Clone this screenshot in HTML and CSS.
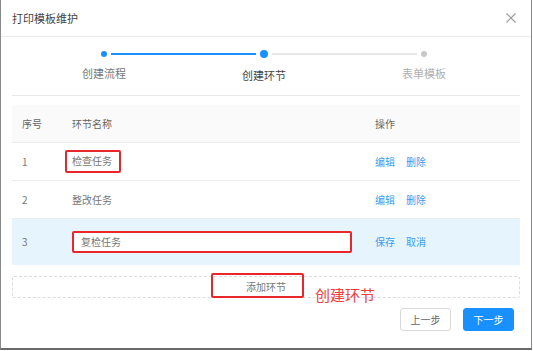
FILE: index.html
```html
<!DOCTYPE html>
<html lang="zh">
<head>
<meta charset="utf-8">
<link rel="stylesheet" href="styles.css">
</head>
<body>
<div class="frame">
  <div class="header">
    <span class="title">打印模板维护</span>
    <svg class="close" width="10" height="10" viewBox="0 0 10 10"><path d="M0.5 0.5L9.5 9.5M9.5 0.5L0.5 9.5" stroke="#999" stroke-width="1.1" fill="none"/></svg>
  </div>
  <div class="steps">
    <div class="track">
      <span class="dot done"></span>
      <span class="line done"></span>
      <span class="dot active"></span>
      <span class="line"></span>
      <span class="dot"></span>
    </div>
    <div class="labels">
      <span class="label">创建流程</span>
      <span class="label current">创建环节</span>
      <span class="label todo">表单模板</span>
    </div>
  </div>
  <div class="table">
    <div class="row head">
      <div class="cell">序号</div>
      <div class="cell">环节名称</div>
      <div class="cell">操作</div>
    </div>
    <div class="row">
      <div class="cell">1</div>
      <div class="cell"><span class="mark">检查任务</span></div>
      <div class="cell ops"><a>编辑</a><a>删除</a></div>
    </div>
    <div class="row">
      <div class="cell">2</div>
      <div class="cell">整改任务</div>
      <div class="cell ops"><a>编辑</a><a>删除</a></div>
    </div>
    <div class="row editing">
      <div class="cell">3</div>
      <div class="cell"><div class="input">复检任务</div></div>
      <div class="cell ops"><a>保存</a><a>取消</a></div>
    </div>
  </div>
  <div class="add">
    <span class="add-text">添加环节</span>
    <span class="add-mark"></span>
    <span class="note">创建环节</span>
  </div>
  <div class="footer">
    <button class="btn">上一步</button>
    <button class="btn primary">下一步</button>
  </div>
</div>
</body>
</html>
```

FILE: styles.css
```css
* { box-sizing: border-box; }
html, body { margin: 0; padding: 0; background: #fff; }
body {
  width: 533px;
  height: 351px;
  overflow: hidden;
  font-family: "Noto Sans CJK SC", "Noto Sans", sans-serif;
}
.frame {
  width: 532px;
  height: 350px;
  border-left: 1px solid #8a8a8a;
  border-right: 1px solid #8a8a8a;
  border-bottom: 2px solid #6a6a6a;
  background: #fff;
}
.header {
  height: 37px;
  border-bottom: 1px solid #e8e8e8;
  display: flex;
  align-items: center;
  justify-content: space-between;
  padding: 0 15px 0 11px;
}
.title { font-size: 11px; color: #444; line-height: 14px; }
.close { display: block; }
.steps {
  margin: 0 11px;
  padding-top: 13px;
  padding-bottom: 13px;
  border-bottom: 1px solid #e8e8e8;
}
.track {
  width: 326px;
  margin-left: 89px;
  height: 8px;
  display: flex;
  align-items: center;
}
.dot {
  width: 6px;
  height: 6px;
  border-radius: 50%;
  background: #c8c8c8;
  flex: none;
}
.dot.done { background: #1890ff; }
.dot.active { width: 8px; height: 8px; background: #1890ff; }
.line {
  flex: 1;
  height: 2px;
  margin: 0 4px;
  background: #e8e8e8;
}
.line.done { background: #1890ff; }
.labels {
  width: 480px;
  margin: 8px 0 0 12px;
  display: grid;
  grid-template-columns: 160px 160px 160px;
}
.label {
  text-align: center;
  font-size: 11px;
  line-height: 14px;
  color: #777;
}
.label.current { color: #444; padding-top: 2px; }
.label.todo { color: #b0b0b0; }
.table { margin: 9px 11px 0; }
.row {
  display: grid;
  grid-template-columns: 50px 303px 1fr;
  align-items: center;
  height: 38px;
  border-bottom: 1px solid #ececec;
  font-size: 10px;
  color: #777;
}
.row.head { background: #fafafa; color: #666; }
.row.editing { background: #e6f5fd; height: 46px; border-bottom: 1px solid #e6f5fd; }
.cell { padding-left: 10px; line-height: 14px; }
.mark {
  display: inline-block;
  margin-left: -7px;
  padding: 2px 7px 3px 5px;
  border: 2px solid #e8262b;
  border-radius: 2px;
  width: 56px;
}
.input {
  width: 280px;
  height: 22px;
  border: 2px solid #e8262b;
  border-radius: 2px;
  background: #fff;
  padding-left: 7px;
  display: flex;
  align-items: center;
  color: #777;
}
.ops a { color: #3a9cf2; margin-right: 11px; cursor: pointer; }
.add {
  position: relative;
  margin: 11px 11px 0;
  height: 22px;
  border: 1px dashed #dcdcdc;
  border-radius: 2px;
  display: flex;
  align-items: center;
  justify-content: center;
}
.add-text { font-size: 10px; color: #777; line-height: 14px; }
.add-mark {
  position: absolute;
  left: 198px;
  top: -4px;
  width: 93px;
  height: 25px;
  border: 2px solid #e8262b;
  border-radius: 2px;
}
.note {
  position: absolute;
  left: 302px;
  top: 9px;
  font-size: 15px;
  line-height: 18px;
  color: #f23b3b;
  white-space: nowrap;
}
.footer {
  display: flex;
  justify-content: flex-end;
  gap: 12px;
  margin: 10px 17px 0 0;
}
.btn {
  width: 51px;
  height: 23px;
  border: 1px solid #d9d9d9;
  border-radius: 3px;
  background: #fff;
  color: #666;
  font-family: inherit;
  font-size: 10px;
  padding: 0;
}
.btn.primary { background: #1890ff; border-color: #1890ff; color: #fff; }
```
